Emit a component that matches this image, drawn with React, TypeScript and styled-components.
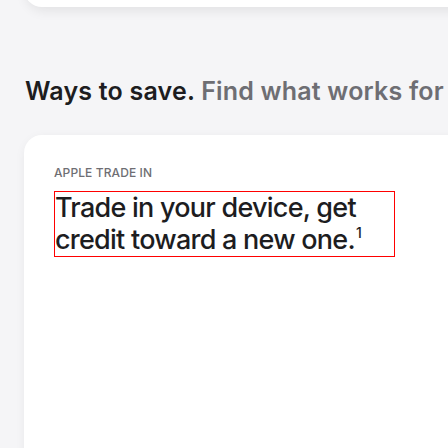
import React from "react";
import styled, { createGlobalStyle } from "styled-components";

const Global = createGlobalStyle`
  html, body { margin: 0; padding: 0; background: #f5f5f7; overflow: hidden; }
  body { font-family: Inter, "Noto Sans", sans-serif; -webkit-font-smoothing: antialiased; }
`;

const Page = styled.div`
  width: 448px;
  height: 448px;
  overflow: hidden;
  display: flex;
  flex-direction: column;
  padding-left: 24px;
  box-sizing: border-box;
`;

const Card = styled.div<{ $height: number }>`
  flex: none;
  width: 480px;
  height: ${(p) => p.$height}px;
  background: #fff;
  border-radius: 18px;
  box-shadow: 2px 4px 12px rgba(0, 0, 0, 0.08);
  box-sizing: border-box;
`;

const TopCard = styled(Card)`
  margin-top: -33px;
`;

const Heading = styled.h2`
  margin: 69px 0 0 1px;
  font-family: Inter, "Noto Sans", sans-serif;
  font-size: 25px;
  line-height: 30px;
  font-weight: 600;
  letter-spacing: 0.2px;
  color: #1d1d1f;
  white-space: nowrap;
`;

const Muted = styled.span`
  color: #6e6e73;
`;

const TradeCard = styled(Card)`
  margin-top: 29px;
  padding: 30px 30px;
`;

const Eyebrow = styled.div`
  font-family: Inter, "Noto Sans", sans-serif;
  font-size: 12px;
  line-height: 16px;
  font-weight: 500;
  letter-spacing: 0.1px;
  color: #6e6e73;
`;

const Title = styled.div`
  margin-top: 10px;
  width: 341px;
  box-sizing: border-box;
  border: 1px solid #ff0000;
  font-family: Inter, "Noto Sans", sans-serif;
  font-size: 27px;
  line-height: 32px;
  font-weight: 500;
  letter-spacing: -0.75px;
  color: #1d1d1f;
`;

const Sup = styled.sup`
  font-size: 14px;
  line-height: 0;
  vertical-align: 11px;
  font-weight: 500;
  letter-spacing: 0;
  margin-left: 1px;
`;

export default function App() {
  return (
    <>
      <Global />
      <Page>
        <TopCard $height={40} />
        <Heading>
          Ways to save. <Muted>Find what works for you.</Muted>
        </Heading>
        <TradeCard $height={400}>
          <Eyebrow>APPLE TRADE IN</Eyebrow>
          <Title>
            Trade in your device, get credit toward a new one.<Sup>1</Sup>
          </Title>
        </TradeCard>
      </Page>
    </>
  );
}
